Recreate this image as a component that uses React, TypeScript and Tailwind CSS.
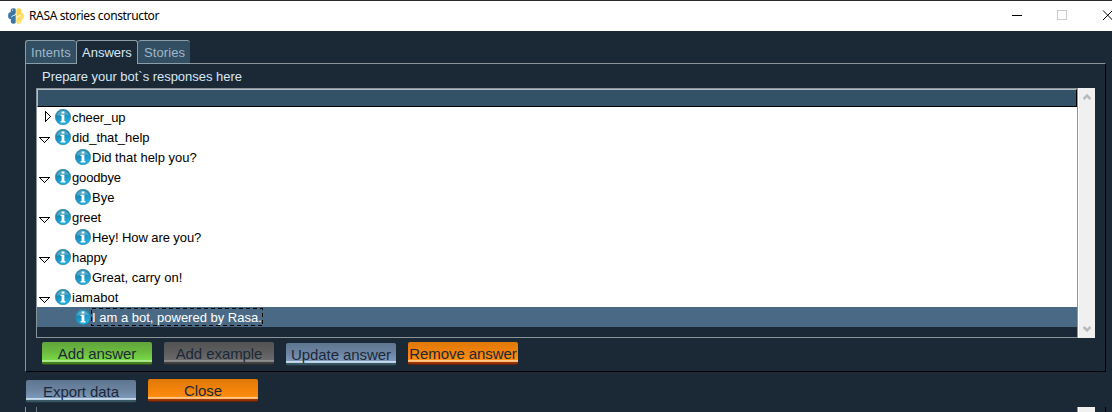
import React from 'react';

type Row = { label: string; kind: 'open' | 'closed' | 'leaf'; selected?: boolean; spacing?: string };

const rows: Row[] = [
  { label: 'cheer_up', kind: 'closed', spacing: 'tracking-[-0.1px]' },
  { label: 'did_that_help', kind: 'open', spacing: 'tracking-[-0.05px]' },
  { label: 'Did that help you?', kind: 'leaf' },
  { label: 'goodbye', kind: 'open', spacing: 'tracking-[-0.14px]' },
  { label: 'Bye', kind: 'leaf' },
  { label: 'greet', kind: 'open', spacing: 'tracking-[-0.1px]' },
  { label: 'Hey! How are you?', kind: 'leaf', spacing: 'tracking-[-0.08px]' },
  { label: 'happy', kind: 'open', spacing: 'tracking-[-0.1px]' },
  { label: 'Great, carry on!', kind: 'leaf' },
  { label: 'iamabot', kind: 'open' },
  { label: 'I am a bot, powered by Rasa.', kind: 'leaf', selected: true },
];

function InfoIcon() {
  return (
    <svg width="16" height="16" viewBox="0 0 16 16" className="block shrink-0">
      <defs>
        <linearGradient id="ball" x1="0" y1="0" x2="0.4" y2="1">
          <stop offset="0" stopColor="#4b9fbd" />
          <stop offset="0.45" stopColor="#1988b3" />
          <stop offset="1" stopColor="#20b2e4" />
        </linearGradient>
      </defs>
      <circle cx="8" cy="8" r="7.7" fill="url(#ball)" stroke="#287b9d" strokeWidth="0.6" />
      <path d="M1.9 6.8A6.3 6.3 0 0 1 14 6.2Q8 5 1.9 6.8Z" fill="#8cc8dc" opacity="0.45" />
      <path d="M6.6 2.4h2.8v2h-2.8zM5.6 5.8h3.8v6.3h1v1.3H5.6v-1.3h1V6.9h-1z" fill="#fff" />
    </svg>
  );
}

function Toggle({ open }: { open: boolean }) {
  return open ? (
    <svg width="12" height="8" viewBox="0 0 12 8" className="mt-1.5 block" shapeRendering="crispEdges">
      <path d="M0.5 1.5H10.5L5.5 6.5Z" fill="#fff" stroke="#000" />
    </svg>
  ) : (
    <svg width="12" height="12" viewBox="0 0 12 12" className="block" shapeRendering="crispEdges">
      <path d="M6.5 0.5V10.5L11.5 5.5Z" fill="#fff" stroke="#000" />
    </svg>
  );
}

function TreeRow({ row }: { row: Row }) {
  return (
    <div className={`flex h-5 items-center ${row.selected ? 'bg-[#4a6984] text-white' : 'bg-white text-black'}`}>
      {row.kind === 'leaf' ? (
        <span className="w-[38px] shrink-0" />
      ) : (
        <span className="w-[18px] shrink-0 pl-0.5">
          <Toggle open={row.kind === 'open'} />
        </span>
      )}
      <InfoIcon />
      <span className={`relative ml-px h-[17px] whitespace-nowrap text-[13px] leading-[17px] ${row.spacing ?? ''}`}>
        {row.label}
        {row.selected && (
          <svg width="172" height="18" className="absolute -left-px -top-px" shapeRendering="crispEdges">
            <rect x="0.5" y="0.5" width="171" height="17" fill="none" stroke="#000" strokeDasharray="4 3" />
          </svg>
        )}
      </span>
    </div>
  );
}

const looks = {
  green: 'bg-[linear-gradient(#62a43c_0px,#6bbb3f_10px,#78d846_18px,#b5ee96_18px,#9be472_20px,#4b8426_20px,#477a23_22px,#18220f_23px)]',
  gray: 'bg-[linear-gradient(#535353_0px,#5d5d5d_10px,#6b6b6b_18px,#929292_18px,#808080_20px,#454545_20px,#3b3b3b_22px,#171b1f_23px)]',
  blue: 'bg-[linear-gradient(#5f7690_0px,#6c84a1_10px,#7c98bb_18px,#d0e0ef_18px,#b4cade_20px,#3b5b69_20px,#35515e_22px,#111b24_23px)]',
  orange: 'bg-[linear-gradient(#df7908_0px,#f18209_10px,#ff8e12_18px,#ffcf98_18px,#ffb562_20px,#a63805_20px,#8e2c05_22px,#2b1810_23px)]',
};

function GlossButton({ look, label, className = '' }: { look: keyof typeof looks; label: string; className?: string }) {
  return (
    <button
      className={`flex h-[23px] w-[110px] shrink-0 justify-center whitespace-nowrap rounded-[2px] text-[15px] leading-[24px] tracking-[-0.08px] text-[#1b2838] ${looks[look]} ${className}`}
    >
      {label}
    </button>
  );
}

function Chevron({ up }: { up: boolean }) {
  return (
    <svg width="8" height="6" viewBox="0 0 8 6" className="block">
      <path d={up ? 'M0.6 5L4 1.6L7.4 5' : 'M0.6 1L4 4.4L7.4 1'} fill="none" stroke="#bababa" strokeWidth="2.5" />
    </svg>
  );
}

export default function App() {
  return (
    <div className="flex h-[412px] w-[1112px] flex-col overflow-hidden bg-[#1b2836] font-['Liberation_Sans',Arial,sans-serif]">
      <header className="flex h-[31px] shrink-0 items-center border-t border-[#2b2b2b] bg-white">
        <svg width="16" height="16" viewBox="0 0 16 16" className="ml-2 shrink-0">
          <path d="M7.7 1.4Q7.7.3 5.6.3Q2.7.3 2.7 2.5V4.2H1.8Q.1 4.6.1 7.4Q.1 10.6 2 11H3.2V9.4Q3.4 7.5 5.3 7.2Q7.8 6.8 7.8 4.8Z" fill="#3b78a9" />
          <path d="M8.4 1.4Q8.6.3 10.8.3Q13.5.4 13.5 2.6V4.7Q13.4 6.8 11.2 7.2Q8.5 7.8 8.3 9.6Z" fill="#ffd54b" />
          <path d="M7.7 14.5Q7.4 15.7 5.3 15.7Q2.7 15.5 2.8 13.2V10.8Q3 8.4 5.4 8Q7.5 7.6 7.7 6.4Z" fill="#3b78a9" />
          <path d="M8.3 14.3Q8.4 15.7 10.7 15.7Q13.4 15.6 13.4 13.3V11.5H14.1Q15.8 11.2 15.8 8.2Q15.8 5 14.1 4.9H13V6.5Q12.7 8.1 10.8 8.4Q8.3 8.8 8.3 11Z" fill="#ffdc62" />
          <path d="M4 2.2h1M11 13.8h1" stroke="#fff" />
        </svg>
        <span className="ml-[5px] whitespace-nowrap font-['Noto_Sans',sans-serif] text-[12px] leading-4 tracking-[-0.36px] text-black">
          RASA stories constructor
        </span>
        <svg width="100" height="12" viewBox="0 0 100 12" className="ml-auto shrink-0" shapeRendering="crispEdges">
          <path d="M0 5.5h10" stroke="#000" />
          <rect x="45.5" y="0.5" width="9" height="9" fill="none" stroke="#ccc" />
          <path d="M91 0.5l9.5 9.5M91 10l9.5-9.5" stroke="#000" shapeRendering="auto" />
        </svg>
      </header>

      <nav className="ml-[25px] mt-[9px] flex h-6 shrink-0 text-[13px] leading-[23px] tracking-[0.1px]">
        <div className="z-10 flex h-6 w-[51px] rounded-t-[3px] border-b border-l border-t border-[#8b9da7] bg-[#324e63] pl-[5px] text-[#9fb8c9]">Intents</div>
        <div className="z-10 flex h-6 w-[62px] rounded-t-[3px] border-x border-t border-[#8b9da7] bg-[#1b2836] pl-[5px] tracking-normal text-[#d5e9f8]">Answers</div>
        <div className="z-10 flex h-6 w-[52px] rounded-t-[3px] border-b border-t border-[#8b9da7] bg-[#324e63] pl-1.5 text-[#9fb8c9]">Stories</div>
      </nav>

      <main className="-mt-px ml-[25px] flex h-[309px] w-[1081px] shrink-0 flex-col border border-b-black border-l-[#8b9499] border-r-black border-t-[#8b9499]">
        <div className="h-[24px] shrink-0 pl-4 text-[13px] leading-[25px] tracking-[-0.03px] text-[#d5e9f8]">Prepare your bot`s responses here</div>
        <section className="ml-2.5 flex h-[250px] w-[1059px] shrink-0">
          <div className="flex w-[1042px] flex-col border border-[#8b9499]">
            <div className="h-[18px] shrink-0 border border-b-black border-l-[#b0bdc6] border-r-black border-t-[#b0bdc6] bg-[#335267]" />
            {rows.map((row) => (
              <TreeRow key={row.label} row={row} />
            ))}
          </div>
          <div className="flex w-[17px] flex-col items-center justify-between border-l border-white bg-[#f0f0f0] py-1.5">
            <Chevron up />
            <Chevron up={false} />
          </div>
        </section>
        <div className="mt-1 flex gap-3 pl-4">
          <GlossButton look="green" label="Add answer" />
          <GlossButton look="gray" label="Add example" />
          <GlossButton look="blue" label="Update answer" className="mt-px" />
          <GlossButton look="orange" label="Remove answer" />
        </div>
      </main>

      <div className="ml-[26px] mt-[7px] flex shrink-0 gap-3">
        <GlossButton look="blue" label="Export data" className="mt-px" />
        <GlossButton look="orange" label="Close" />
      </div>

      <div className="ml-[25px] mt-[4px] flex h-[5px] w-[1081px] shrink-0 border-l border-r border-l-[#8b9499] border-r-black">
        <div className="ml-2.5 w-[1042px] border-l border-r border-l-[#6b767e] border-r-[#8b9499]" />
        <div className="w-[17px] border-l border-white bg-[#f0f0f0]" />
      </div>
    </div>
  );
}
